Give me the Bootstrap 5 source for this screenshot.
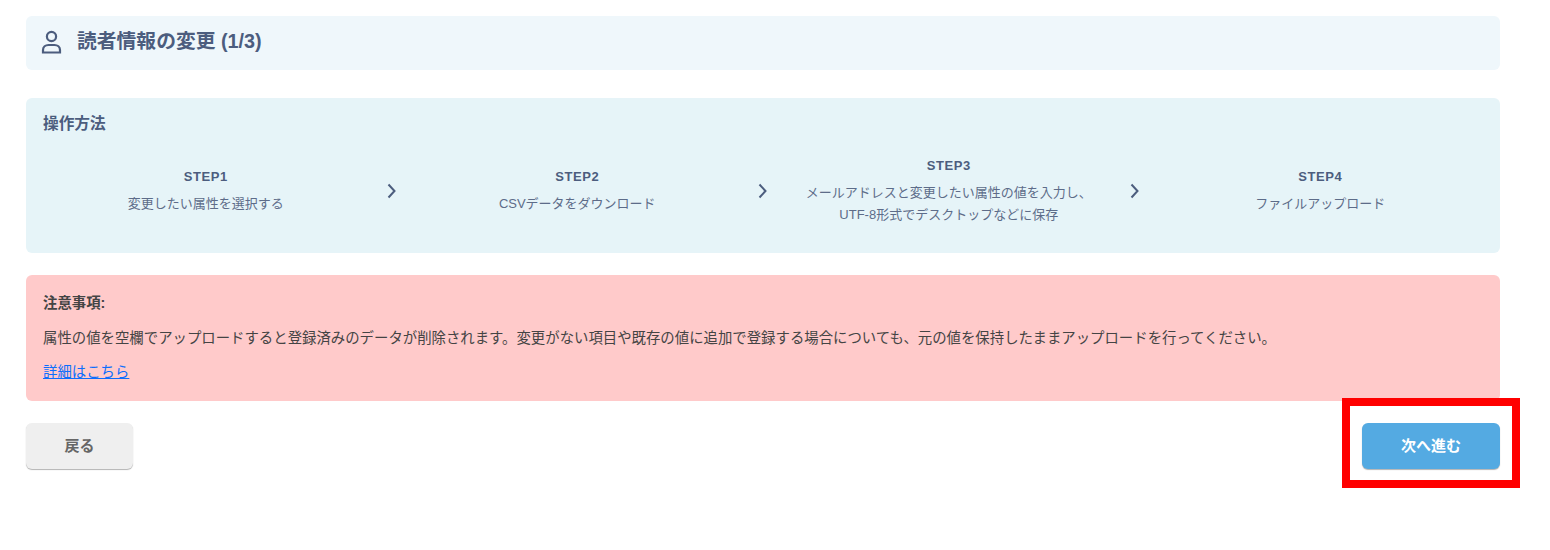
<!DOCTYPE html>
<html lang="ja">
<head>
    <meta charset="UTF-8">
    <meta name="viewport" content="width=device-width, initial-scale=1.0">
    <title>読者情報の変更</title>
    <link href="https://cdn.jsdelivr.net/npm/bootstrap@5.3.0/dist/css/bootstrap.min.css" rel="stylesheet">
    <style>
        body {
            font-family: "Liberation Sans", "Noto Sans CJK JP", sans-serif;
            background: #fff;
            min-height: 550px;
        }
        .page-wrap {
            width: 1474px;
            margin-left: 26px;
            padding-top: 16px;
            padding-bottom: 60px;
            position: relative;
        }
        .title-bar {
            height: 54px;
            background: #eff7fb;
            border-radius: 6px;
            padding-left: 15px;
            padding-bottom: 2px;
            color: #4c5d7e;
        }
        .title-bar h1 {
            font-size: 19.8px;
            font-weight: 700;
            margin: 0 0 0 15px;
        }
        .howto-panel {
            height: 155px;
            margin-top: 28px;
            background: #e6f4f8;
            border-radius: 6px;
            padding: 16px 17px 0;
            color: #4c5d7e;
        }
        .howto-panel h2 {
            font-size: 15.7px;
            font-weight: 700;
            line-height: 20px;
            margin: 0;
        }
        .step-row {
            margin-top: 19px;
            height: 76px;
        }
        .step-item {
            flex: 1 1 0;
            text-align: center;
            font-size: 13px;
            line-height: 22px;
            color: #5d6c89;
        }
        .step-item strong {
            display: block;
            font-size: 13px;
            line-height: 20px;
            margin-bottom: 6px;
            letter-spacing: .6px;
            color: #4c5d7e;
        }
        .step-arrow {
            width: 46px;
        }
        .notice-panel {
            height: 126px;
            margin-top: 22px;
            background: #ffcaca;
            border-radius: 6px;
            padding: 18px 17px 0;
            font-size: 14.4px;
            color: #444;
        }
        .notice-panel p {
            line-height: 20px;
            margin: 0 0 14px;
        }
        .notice-panel .notice-head {
            margin-bottom: 15px;
        }
        .notice-panel a {
            color: #0d6efd;
        }
        .action-row {
            margin-top: 22px;
        }
        .btn-back, .btn-next {
            height: 46px;
            font-size: 15px;
            font-weight: 700;
            border: 0;
            border-radius: 6px;
            box-shadow: 0 1px 1px rgba(0, 0, 0, .3);
        }
        .btn-back {
            width: 107px;
            background: #efefef;
            color: #666;
        }
        .btn-next {
            width: 138px;
            background: #54aae2;
            color: #fff;
        }
        .red-frame {
            position: absolute;
            left: 1316px;
            top: 398px;
            width: 178px;
            height: 90px;
            border: 8px solid #f00;
            pointer-events: none;
        }
    </style>
</head>
<body>
    <div class="page-wrap">
        <div class="title-bar d-flex align-items-center">
            <svg width="21" height="24" viewBox="0 0 21 24" fill="none" stroke="#4c5d7e" stroke-width="2.2">
                <circle cx="10.5" cy="6.5" r="4.6"/>
                <path d="M2 22.500h17v-2.500c0-3-2.500-5-5.500-5h-6c-3 0-5.500 2-5.500 5z"/>
            </svg>
            <h1>読者情報の変更 (1/3)</h1>
        </div>

        <div class="howto-panel">
            <h2>操作方法</h2>
            <div class="step-row d-flex align-items-center">
                <div class="step-item">
                    <strong>STEP1</strong>
                    変更したい属性を選択する
                </div>
                <div class="step-arrow d-flex justify-content-center">
                    <svg width="10" height="16" viewBox="0 0 10 16" fill="none" stroke="#4c5d7e" stroke-width="2"><path d="M1.500 1.500 7.500 8l-6 6.500"/></svg>
                </div>
                <div class="step-item">
                    <strong>STEP2</strong>
                    CSVデータをダウンロード
                </div>
                <div class="step-arrow d-flex justify-content-center">
                    <svg width="10" height="16" viewBox="0 0 10 16" fill="none" stroke="#4c5d7e" stroke-width="2"><path d="M1.500 1.500 7.500 8l-6 6.500"/></svg>
                </div>
                <div class="step-item">
                    <strong>STEP3</strong>
                    メールアドレスと変更したい属性の値を入力し、<br>UTF-8形式でデスクトップなどに保存
                </div>
                <div class="step-arrow d-flex justify-content-center">
                    <svg width="10" height="16" viewBox="0 0 10 16" fill="none" stroke="#4c5d7e" stroke-width="2"><path d="M1.500 1.500 7.500 8l-6 6.500"/></svg>
                </div>
                <div class="step-item">
                    <strong>STEP4</strong>
                    ファイルアップロード
                </div>
            </div>
        </div>

        <div class="notice-panel">
            <p class="notice-head"><strong>注意事項:</strong></p>
            <p>属性の値を空欄でアップロードすると登録済みのデータが削除されます。変更がない項目や既存の値に追加で登録する場合についても、元の値を保持したままアップロードを行ってください。</p>
            <p><a href="#">詳細はこちら</a></p>
        </div>

        <div class="action-row d-flex justify-content-between">
            <button type="button" class="btn btn-back">戻る</button>
            <button type="button" class="btn btn-next">次へ進む</button>
        </div>

        <div class="red-frame"></div>
    </div>

    <script src="https://cdn.jsdelivr.net/npm/bootstrap@5.3.0/dist/js/bootstrap.bundle.min.js"></script>
</body>
</html>
